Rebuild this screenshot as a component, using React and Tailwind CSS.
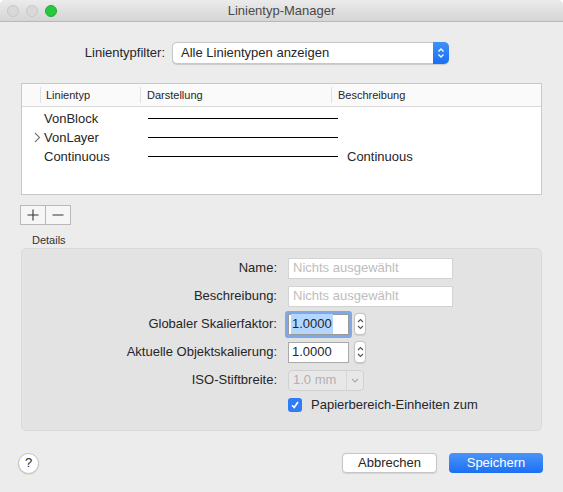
import React from "react";

const font = { fontFamily: '"Liberation Sans", Arial, sans-serif' };

function Stepper() {
  return (
    <div className="ml-[5px] w-[12px] h-[22px] rounded-[4px] border border-[#c4c4c4] bg-white flex flex-col items-center justify-center shadow-[0_0.5px_1px_rgba(0,0,0,0.1)]">
      <svg width="7" height="14" viewBox="0 0 7 14" fill="none" stroke="#555" strokeWidth="1.1">
        <path d="M1 5 L3.5 2.5 L6 5" />
        <path d="M1 9 L3.5 11.5 L6 9" />
      </svg>
    </div>
  );
}

function Row({ label, children }) {
  return (
    <div className="flex items-center h-[28px]">
      <div className="w-[266px] text-right text-[13px] text-[#262626] pr-[11px]">{label}</div>
      <div className="flex items-center">{children}</div>
    </div>
  );
}

export default function App() {
  const rows = [
    { name: "VonBlock", desc: "" },
    { name: "VonLayer", desc: "", arrow: true },
    { name: "Continuous", desc: "Continuous" },
  ];
  return (
    <div style={font} className="w-[563px] h-[492px] bg-[#ececec] flex flex-col rounded-t-[5px] overflow-hidden text-[#262626]">
      <div className="h-[22px] shrink-0 bg-gradient-to-b from-[#ebebeb] to-[#d5d5d5] border-b border-[#b8b8b8] flex items-center relative">
        <div className="flex gap-[7px] pl-[7px]">
          <span className="w-[12px] h-[12px] rounded-full bg-[#d9d9d9] border border-[#c6c6c6]" />
          <span className="w-[12px] h-[12px] rounded-full bg-[#d9d9d9] border border-[#c6c6c6]" />
          <span className="w-[12px] h-[12px] rounded-full bg-[#28c840] border border-[#1eaa33]" />
        </div>
        <div className="absolute inset-0 flex items-center justify-center text-[13px] text-[#4a4a4a]">Linientyp-Manager</div>
      </div>

      <div className="flex items-center mt-[20px] h-[22px]">
        <div className="w-[172px] text-right text-[13px] pr-[7px]">Linientypfilter:</div>
        <div className="w-[277px] h-[22px] bg-white rounded-[5px] border border-[#c8c8c8] flex items-center shadow-[0_0.5px_1px_rgba(0,0,0,0.15)]">
          <span className="flex-1 pl-[8px] text-[13px]">Alle Linientypen anzeigen</span>
          <div className="w-[16px] h-[22px] -mr-px rounded-r-[5px] bg-gradient-to-b from-[#3f91f7] to-[#1a6ff4] flex items-center justify-center">
            <svg width="8" height="12" viewBox="0 0 8 12" fill="none" stroke="white" strokeWidth="1.3">
              <path d="M1.5 4.5 L4 2 L6.5 4.5" />
              <path d="M1.5 7.5 L4 10 L6.5 7.5" />
            </svg>
          </div>
        </div>
      </div>

      <div className="ml-[21px] mt-[19px] w-[521px] h-[112px] bg-white border border-[#c8c8c8] flex flex-col">
        <div className="h-[23px] flex items-center border-b border-[#d8d8d8] text-[11px] text-[#262626] bg-[#fafafa]">
          <div className="w-[19px] h-[16px] border-r border-[#e0e0e0]" />
          <div className="w-[100px] h-[16px] pl-[5px] border-r border-[#e0e0e0] flex items-center">Linientyp</div>
          <div className="w-[191px] h-[16px] pl-[6px] border-r border-[#e0e0e0] flex items-center">Darstellung</div>
          <div className="pl-[6px] flex items-center">Beschreibung</div>
        </div>
        <div className="pt-[2px]">
          {rows.map((r) => (
            <div key={r.name} className="h-[19px] flex items-center text-[13px]">
              <div className="w-[22px] flex items-center justify-end pr-[3px]">
                {r.arrow && (
                  <svg width="7" height="11" viewBox="0 0 7 11" fill="none" stroke="#777" strokeWidth="1.1">
                    <path d="M1 1 L5.5 5.5 L1 10" />
                  </svg>
                )}
              </div>
              <div className="w-[104px]">{r.name}</div>
              <div className="w-[199px] flex items-center">
                <div className="w-[190px] h-px bg-black" />
              </div>
              <div>{r.desc}</div>
            </div>
          ))}
        </div>
      </div>

      <div className="ml-[20px] mt-[10px] flex w-[51px] h-[20px] border border-[#b9b9b9] bg-[#f6f6f6]">
        <div className="w-[25px] border-r border-[#b9b9b9] flex items-center justify-center">
          <svg width="12" height="12" viewBox="0 0 12 12" stroke="#333" strokeWidth="1.1">
            <path d="M6 0.5 V11.5 M0.5 6 H11.5" />
          </svg>
        </div>
        <div className="flex-1 flex items-center justify-center">
          <svg width="12" height="12" viewBox="0 0 12 12" stroke="#333" strokeWidth="1.1">
            <path d="M0.5 6 H11.5" />
          </svg>
        </div>
      </div>

      <div className="ml-[32px] mt-[8px] h-[14px] leading-[14px] text-[11px] text-[#333]">Details</div>

      <div className="ml-[21px] mt-[1px] w-[521px] h-[183px] rounded-[5px] bg-[#e3e3e3] border border-[#dadada] flex flex-col pt-[5px]">
        <Row label="Name:">
          <div className="w-[165px] h-[21px] bg-white border border-[#d3d3d3] pl-[4px] flex items-center text-[13px] text-[#bdbdbd]">Nichts ausgewählt</div>
        </Row>
        <Row label="Beschreibung:">
          <div className="w-[165px] h-[21px] bg-white border border-[#d3d3d3] pl-[4px] flex items-center text-[13px] text-[#bdbdbd]">Nichts ausgewählt</div>
        </Row>
        <Row label="Globaler Skalierfaktor:">
          <div className="w-[61px] h-[21px] bg-white border border-[#9a9a9a] ring-[3px] ring-[#7fa8e6] rounded-[1px] pl-[2px] flex items-center text-[13px]">
            <span className="bg-[#b3d7ff] px-px">1.0000</span>
          </div>
          <Stepper />
        </Row>
        <Row label="Aktuelle Objektskalierung:">
          <div className="w-[61px] h-[21px] bg-white border border-[#a9a9a9] pl-[3px] flex items-center text-[13px]">1.0000</div>
          <Stepper />
        </Row>
        <Row label="ISO-Stiftbreite:">
          <div className="w-[76px] h-[21px] rounded-[4px] border border-[#d0d0d0] bg-[#e8e8e8] flex items-center text-[13px] text-[#b0b0b0]">
            <span className="flex-1 pl-[4px]">1.0 mm</span>
            <div className="w-[17px] h-full border-l border-[#d6d6d6] flex items-center justify-center">
              <svg width="8" height="5" viewBox="0 0 8 5" fill="none" stroke="#aaa" strokeWidth="1.1">
                <path d="M1 1 L4 4 L7 1" />
              </svg>
            </div>
          </div>
        </Row>
        <div className="flex items-center h-[22px] pl-[266px]">
          <div className="w-[14px] h-[14px] rounded-[3px] bg-[#2f7cf6] flex items-center justify-center">
            <svg width="10" height="10" viewBox="0 0 10 10" fill="none" stroke="white" strokeWidth="1.6">
              <path d="M2 5.2 L4.2 7.5 L8 2" />
            </svg>
          </div>
          <span className="ml-[9px] text-[13px]">Papierbereich-Einheiten zum</span>
        </div>
      </div>

      <div className="flex items-center mt-[21px] px-[18px] h-[22px]">
        <div className="w-[21px] h-[21px] rounded-full bg-white border border-[#c4c4c4] flex items-center justify-center text-[13px] shadow-[0_0.5px_1px_rgba(0,0,0,0.15)]">?</div>
        <div className="flex-1" />
        <div className="w-[95px] h-[20px] bg-white border border-[#c6c6c6] rounded-[4px] flex items-center justify-center text-[13px] shadow-[0_0.5px_1px_rgba(0,0,0,0.1)]">Abbrechen</div>
        <div className="ml-[12px] mr-[2px] w-[94px] h-[20px] rounded-[4px] bg-gradient-to-b from-[#4a94f8] to-[#1b6ff4] text-white flex items-center justify-center text-[13px]">Speichern</div>
      </div>
    </div>
  );
}
